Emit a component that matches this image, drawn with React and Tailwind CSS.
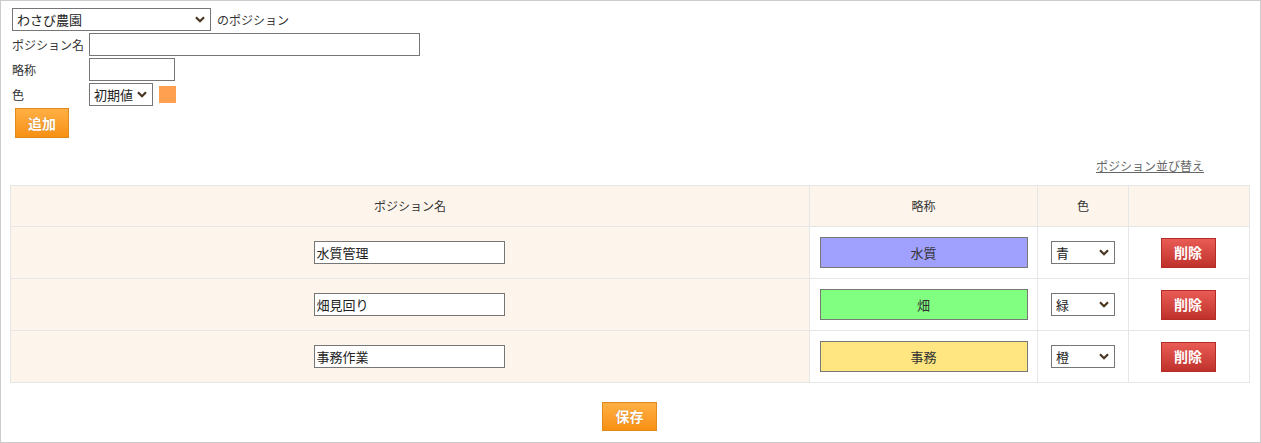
import { useState } from 'react'

const font = { fontFamily: '"Noto Sans CJK JP", "Noto Sans", sans-serif' }

const rows = [
  { name: '水質管理', abbr: '水質', color: '青', bg: 'bg-[#a0a0ff]' },
  { name: '畑見回り', abbr: '畑', color: '緑', bg: 'bg-[#80ff80]' },
  { name: '事務作業', abbr: '事務', color: '橙', bg: 'bg-[#ffe680]' },
]

function Select({ value, className = '' }) {
  return (
    <span className={`relative inline-block h-[23px] ${className}`}>
      <select
        defaultValue={value}
        className="appearance-none w-full h-full border border-[#767676] pl-[4px] text-[13px] text-[#222] bg-white"
      >
        <option>{value}</option>
      </select>
      <svg
        className="absolute right-[6px] top-[8px] pointer-events-none"
        width="10"
        height="7"
        viewBox="0 0 10 7"
      >
        <path d="M1 1.2l4 4 4-4" fill="none" stroke="#4a3520" strokeWidth="2.2" />
      </svg>
    </span>
  )
}

function OrangeButton({ children, className = '' }) {
  return (
    <button
      className={`border border-[#e08a1e] bg-gradient-to-b from-[#ffb043] to-[#f7900f] text-white font-bold text-[14px] [text-shadow:0_0_1px_rgba(0,0,0,0.25)] ${className}`}
    >
      {children}
    </button>
  )
}

export default function App() {
  const [items] = useState(rows)

  return (
    <div style={font} className="w-[1261px] h-[443px] border border-[#cccccc] bg-white text-[#333] box-border">
      <div className="pl-[11px] pt-[7px] text-[12px]">
        <div className="flex items-center h-[23px]">
          <Select value="わさび農園" className="w-[199px]" />
          <span className="ml-[6px]">のポジション</span>
        </div>
        <div className="flex items-center mt-[2px] h-[23px]">
          <span className="w-[77px]">ポジション名</span>
          <input className="w-[331px] h-[23px] border border-[#767676]" />
        </div>
        <div className="flex items-center mt-[2px] h-[23px]">
          <span className="w-[77px]">略称</span>
          <input className="w-[86px] h-[23px] border border-[#767676]" />
        </div>
        <div className="flex items-center mt-[2px] h-[23px]">
          <span className="w-[77px]">色</span>
          <Select value="初期値" className="w-[64px]" />
          <span className="ml-[6px] w-[17px] h-[17px] bg-[#ffa050]" />
        </div>
        <OrangeButton className="mt-[2px] ml-[3px] w-[54px] h-[30px]">追加</OrangeButton>
      </div>

      <div className="flex justify-end pr-[56px] mt-[19px] text-[12px]">
        <a href="#" className="underline text-[#666]">ポジション並び替え</a>
      </div>

      <div className="pl-[9px] pr-[10px] mt-[10px]">
        <table className="w-full border-collapse text-[12px] table-fixed">
          <thead>
            <tr className="bg-[#fdf5ec] h-[41px]">
              <th className="w-[799px] border border-[#e6e6e6] font-normal">ポジション名</th>
              <th className="w-[228px] border border-[#e6e6e6] font-normal">略称</th>
              <th className="w-[91px] border border-[#e6e6e6] font-normal">色</th>
              <th className="border border-[#e6e6e6]" />
            </tr>
          </thead>
          <tbody>
            {items.map((r) => (
              <tr key={r.name} className="h-[52px]">
                <td className="border border-[#e6e6e6] bg-[#fdf5ec] text-center">
                  <input
                    defaultValue={r.name}
                    className="w-[191px] h-[23px] border border-[#767676] bg-white px-[2px] text-[13px] text-[#222] -ml-[2px]"
                  />
                </td>
                <td className="border border-[#e6e6e6] text-center">
                  <div
                    className={`mx-auto w-[208px] h-[31px] border border-[#777] ${r.bg} flex items-center justify-center text-[13px]`}
                  >
                    {r.abbr}
                  </div>
                </td>
                <td className="border border-[#e6e6e6] text-center">
                  <Select value={r.color} className="w-[64px] align-middle" />
                </td>
                <td className="border border-[#e6e6e6] text-center">
                  <button className="-ml-[2px] w-[55px] h-[30px] border border-[#b52d27] bg-gradient-to-b from-[#e85c55] to-[#c0302b] text-white font-bold text-[14px]">
                    削除
                  </button>
                </td>
              </tr>
            ))}
          </tbody>
        </table>
      </div>

      <div className="flex justify-center mt-[19px]">
        <OrangeButton className="w-[55px] h-[29px] ml-[-2px]">保存</OrangeButton>
      </div>
    </div>
  )
}
